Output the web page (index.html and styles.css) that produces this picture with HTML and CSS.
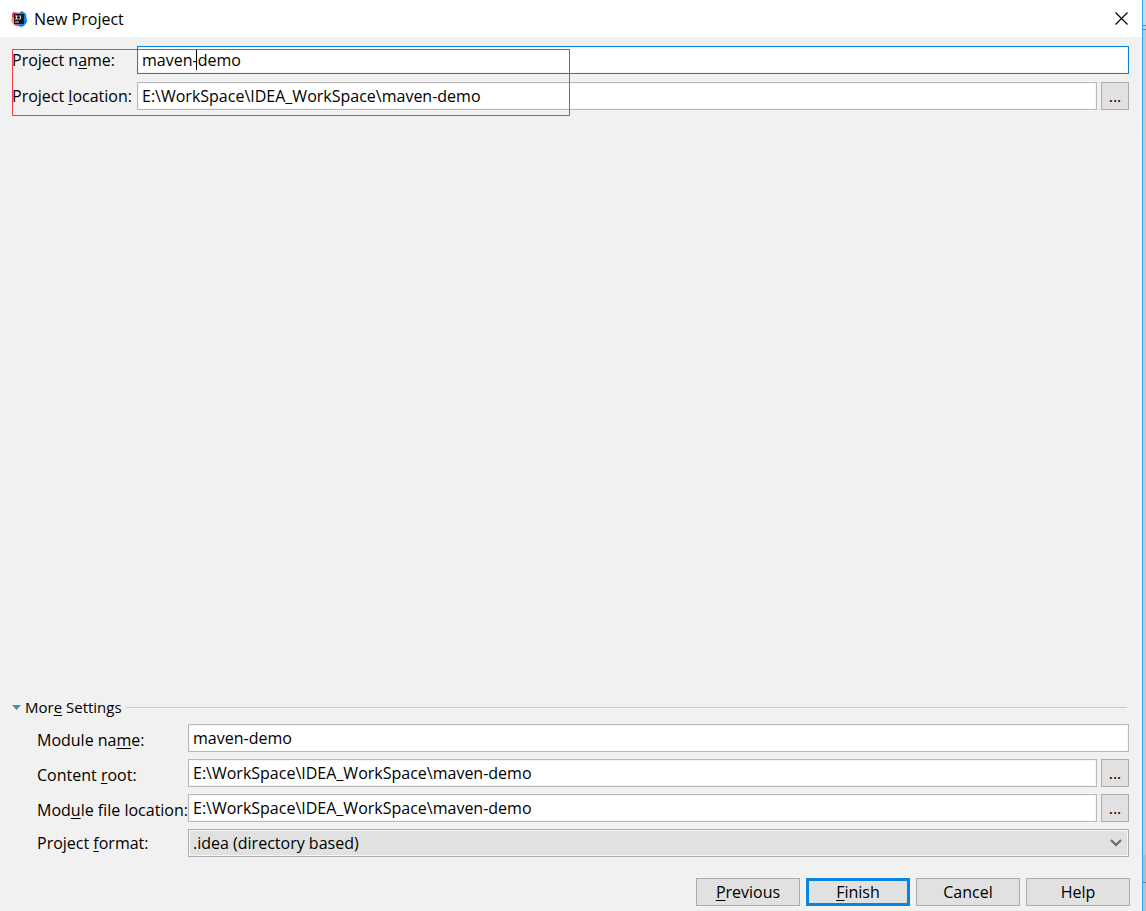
FILE: index.html
```html
<!DOCTYPE html>
<html lang="en">
<head>
    <meta charset="UTF-8">
    <title>New Project</title>
    <link rel="stylesheet" href="styles.css">
</head>
<body>
    <div class="dialog">
        <header class="titlebar">
            <svg class="logo" width="16" height="16" viewBox="0 0 16 16">
                <path d="M1 3 L2 1 L8 2 L8 9 L4 12 L1 9 Z" fill="#fe2d6b"/>
                <path d="M0 8 L4 5 L5 14 L1 12 Z" fill="#fc9a5c"/>
                <path d="M8 2 L11 0 L15 3 L16 11 L13 15 L10 16 L5 14 Z" fill="#0a84f0"/>
                <path d="M2 13 L7 12 L8 15 L5 15 Z" fill="#e54a9c"/>
                <rect x="3" y="3" width="10" height="10" fill="#1c1416"/>
                <path d="M4 5 H7 M5.500 5 V8 M4 8 H7 M8 5 H10 M9.500 5 V8 H7.500 M4 11 H8" stroke="#ddd" stroke-width="1" fill="none"/>
            </svg>
            <h1 class="title">New Project</h1>
            <button class="close" aria-label="Close">
                <svg width="13" height="13" viewBox="0 0 13 13">
                    <path d="M0.500 0.500 L12.500 12.500 M12.500 0.500 L0.500 12.500" stroke="#000" stroke-width="1.200"/>
                </svg>
            </button>
        </header>

        <main class="content">
            <div class="project">
                <div class="row">
                    <label for="project-name">Project n<u>a</u>me:</label>
                    <div class="field">
                        <input class="active" type="text" id="project-name" value="maven-demo">
                        <span class="caret"></span>
                    </div>
                </div>
                <div class="row">
                    <label for="project-location">Project <u>l</u>ocation:</label>
                    <input type="text" id="project-location" value="E:\WorkSpace\IDEA_WorkSpace\maven-demo">
                    <button class="browse">...</button>
                </div>
                <div class="highlight"></div>
            </div>

            <section class="settings">
                <h2 class="settings-title">
                    <svg width="9" height="5" viewBox="0 0 9 5"><path d="M0 0 H9 L4.500 5 Z" fill="#3c93c3"/></svg>
                    <span>Mor<u>e</u> Settings</span>
                </h2>
                <div class="row">
                    <label for="module-name">Module na<u>m</u>e:</label>
                    <input type="text" id="module-name" value="maven-demo">
                </div>
                <div class="row">
                    <label for="content-root">Content <u>r</u>oot:</label>
                    <input type="text" id="content-root" value="E:\WorkSpace\IDEA_WorkSpace\maven-demo">
                    <button class="browse">...</button>
                </div>
                <div class="row">
                    <label for="module-location">Mod<u>u</u>le file location:</label>
                    <input type="text" id="module-location" value="E:\WorkSpace\IDEA_WorkSpace\maven-demo">
                    <button class="browse">...</button>
                </div>
                <div class="row format">
                    <label for="project-format">Project <u>f</u>ormat:</label>
                    <div class="field">
                        <select id="project-format">
                            <option>.idea (directory based)</option>
                        </select>
                        <svg class="arrow" width="12" height="8" viewBox="0 0 12 8"><path d="M1 1 L6 6 L11 1" stroke="#666" stroke-width="2" fill="none"/></svg>
                    </div>
                </div>
            </section>
        </main>

        <footer class="buttons">
            <button><u>P</u>revious</button>
            <button class="default"><u>F</u>inish</button>
            <button>Cancel</button>
            <button>Help</button>
        </footer>
    </div>
</body>
</html>
```
FILE: styles.css
```css
* {
    box-sizing: border-box;
}

/* the window behind shows as a thin strip on the right */
body {
    margin: 0;
    padding-right: 3px;
    background: linear-gradient(#d8d8d8 25px, #858585 25px, #858585 26px, #d0d0d0 26px, #d0d0d0 29px, #858585 29px, #858585 30px, #c8c8c8 30px, #c8c8c8 115px, #d0c8b4 115px, #d0c8b4 140px, #c8c8c8 140px, #c8c8c8 855px, #bababa 855px, #bababa 882px, #808080 882px, #808080 883px, #c0c0c0 883px);
    color: #000;
    font-family: "Open Sans", sans-serif;
    font-size: 16px;
    line-height: 20px;
}

.dialog {
    display: flex;
    flex-direction: column;
    min-height: 100vh;
    background: #f1f1f1;
    border-right: 1px solid #2ca5f8;
}

.titlebar {
    display: flex;
    align-items: center;
    height: 37px;
    padding: 0 14px 0 11px;
    background: #fff;
}

.title {
    flex: 1;
    margin: 0 0 0 7px;
    font-size: 16px;
    font-weight: normal;
}

.close {
    display: flex;
    padding: 0;
    border: none;
    background: none;
}

.content {
    flex: 1;
    display: flex;
    flex-direction: column;
    justify-content: space-between;
    padding: 9px 13px 0 12px;
}

.project {
    position: relative;
    display: grid;
    gap: 8px;
}

.row {
    display: flex;
    height: 28px;
}

label {
    flex: none;
    width: 125px;
    line-height: 28px;
    white-space: nowrap;
}

u {
    text-underline-offset: 2px;
}

.field {
    position: relative;
    display: flex;
    flex: 1;
}

input,
select {
    flex: 1;
    min-width: 0;
    height: 28px;
    padding: 0 4px;
    border: 1px solid #b9b9b9;
    border-radius: 0;
    background: #fff;
    box-shadow: inset 0 0 0 1px #f6f6f6;
    color: #000;
    font: inherit;
    outline: none;
}

input.active {
    border-color: #0a84dc;
}

.caret {
    position: absolute;
    top: 4px;
    left: 59px;
    width: 1px;
    height: 20px;
    background: #000;
}

.browse {
    width: 28px;
    margin-left: 4px;
    padding: 0;
}

button {
    border: 1px solid #adadad;
    background: #e1e1e1;
    color: #000;
    font: inherit;
}

/* red frame round the two project fields */
.highlight {
    position: absolute;
    top: 3px;
    left: 0;
    width: 558px;
    height: 67px;
    border: 1px solid #f83a3a;
    pointer-events: none;
}

.settings {
    display: grid;
    gap: 7px;
}

.settings-title {
    display: flex;
    align-items: center;
    gap: 4px;
    margin: 0;
    font-size: 15px;
    font-weight: normal;
}

.settings-title::after {
    content: "";
    flex: 1;
    height: 1px;
    margin-right: 2px;
    background: #ccc;
}

.settings label {
    width: 176px;
    padding: 2px 0 0 25px;
}

.settings .format label {
    padding-top: 0;
}

select {
    appearance: none;
    background: #e1e1e1;
    border-color: #adadad;
}

.arrow {
    position: absolute;
    top: 10px;
    right: 7px;
    pointer-events: none;
}

.buttons {
    display: flex;
    justify-content: flex-end;
    gap: 6px;
    padding: 21px 12px 5px;
}

.buttons button {
    width: 104px;
    height: 28px;
}

.buttons .default {
    border: 3px solid #0a84dc;
}
```
